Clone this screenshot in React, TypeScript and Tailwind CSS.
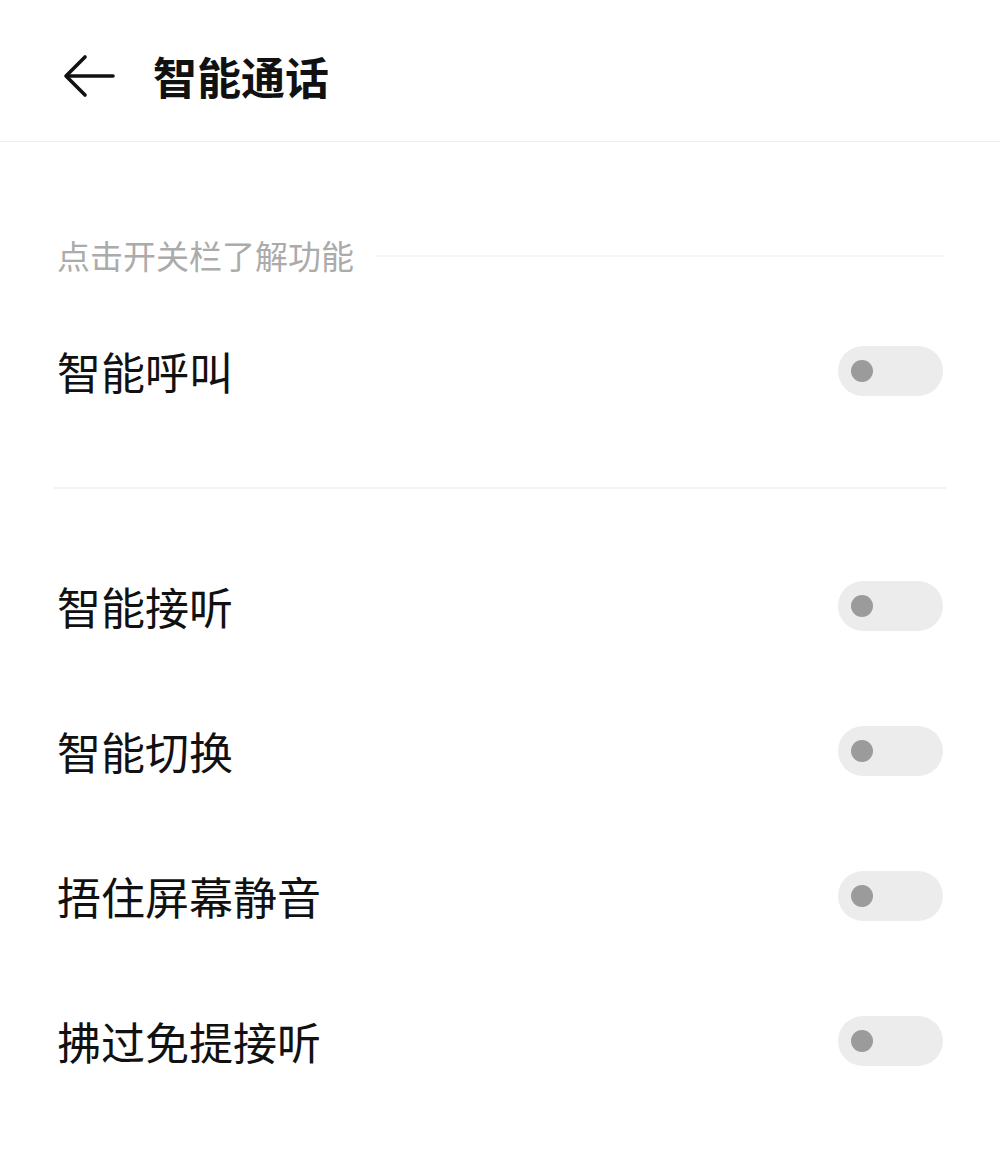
import React from 'react';

const rows1 = ['智能呼叫'];
const rows2 = ['智能接听', '智能切换', '捂住屏幕静音', '拂过免提接听'];

const Toggle: React.FC = () => (
  <div className="w-[105px] h-[50px] rounded-full bg-[#ececec] flex items-center pl-[13px] shrink-0">
    <div className="w-[22px] h-[22px] rounded-full bg-[#9b9b9b]" />
  </div>
);

const Row: React.FC<{ label: string }> = ({ label }) => (
  <div className="h-[145px] flex items-center justify-between pl-[57px] pr-[57px]">
    <span className="text-[44px] text-[#111] leading-none">{label}</span>
    <Toggle />
  </div>
);

export default function App() {
  return (
    <div
      className="w-[1000px] h-[1166px] bg-white overflow-hidden"
      style={{ fontFamily: '"Noto Sans CJK SC", "Noto Sans", sans-serif' }}
    >
      <div className="h-[142px] flex items-center border-b border-[#f0f0f0] pt-[10px]">
        <div className="pl-[63px] pr-[38px]">
          <svg width="52" height="44" viewBox="0 0 52 44" fill="none" stroke="#111" strokeWidth="3.6" strokeLinecap="round" strokeLinejoin="round">
            <path d="M50 22H4" />
            <path d="M22 3L3 22l19 19" />
          </svg>
        </div>
        <h1 className="text-[44px] font-bold text-[#111] leading-none">智能通话</h1>
      </div>

      <div className="h-[156px] flex items-center pl-[57px] pr-[56px] pt-[75px] pb-[4px] gap-[22px]">
        <span className="text-[33px] text-[#ababab] leading-none whitespace-nowrap">点击开关栏了解功能</span>
        <div className="flex-1 h-[2px] bg-[#f7f7f7]" />
      </div>

      {rows1.map((r) => (
        <Row key={r} label={r} />
      ))}

      <div className="h-[90px] flex items-center px-[54px]">
        <div className="w-full h-[2px] bg-[#f3f3f3]" />
      </div>

      {rows2.map((r) => (
        <Row key={r} label={r} />
      ))}
    </div>
  );
}
